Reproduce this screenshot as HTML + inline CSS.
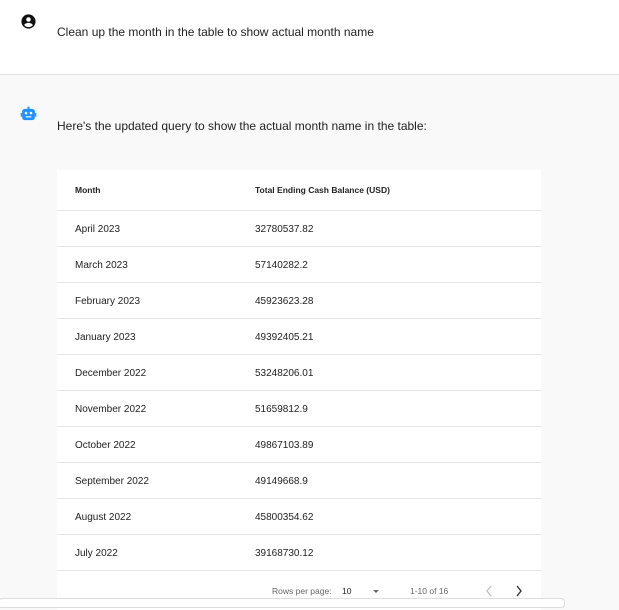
<!DOCTYPE html>
<html><head><meta charset="utf-8"><style>
*{margin:0;padding:0;box-sizing:border-box}
body{width:619px;height:603px;overflow:hidden;font-family:"Liberation Sans",Arial,sans-serif;background:#f9f9f9;position:relative;color:#222}
.top{position:absolute;left:0;top:0;width:619px;height:75px;background:#fff;border-bottom:1px solid #e2e2e2}
.t{position:absolute;font-size:12px;white-space:nowrap}
.tbl{position:absolute;left:57px;top:170px;width:484px;height:440px;background:#fff}
.row{position:absolute;left:0;width:484px;height:36px;border-bottom:1px solid #e6e6e6;font-size:10px}
.row span{position:absolute;top:13px}
.c1{left:18px}.c2{left:198px}
.foot{position:absolute;top:586px;font-size:8.5px;color:#666}
.bot{position:absolute;left:-2px;top:598px;width:567px;height:10px;background:#fff;border:1px solid #ddd;border-radius:4px}
</style></head><body>
<div class="top"></div>
<svg style="position:absolute;left:20px;top:13px" width="17" height="17" viewBox="0 0 24 24"><path fill="#111" d="M12 2a10 10 0 1 0 0 20 10 10 0 0 0 0-20zm0 4a3.2 3.2 0 1 1 0 6.4A3.2 3.2 0 0 1 12 6zm0 14a7.8 7.8 0 0 1-6-2.9c.1-2 4-3.1 6-3.1s5.9 1.1 6 3.1A7.8 7.8 0 0 1 12 20z"/></svg>
<div class="t" style="left:57px;top:25px">Clean up the month in the table to show actual month name</div>
<svg style="position:absolute;left:20px;top:106px" width="17" height="17" viewBox="0 0 24 24"><rect x="10.5" y="1" width="3" height="3" fill="#1e90ff"/><rect x="3" y="4" width="18" height="16" rx="4" fill="#1e90ff"/><rect x="1" y="10" width="2" height="5" fill="#1e90ff"/><rect x="21" y="10" width="2" height="5" fill="#1e90ff"/><circle cx="8.5" cy="10" r="1.8" fill="#fff"/><circle cx="15.5" cy="10" r="1.8" fill="#fff"/><rect x="8" y="14.5" width="8" height="1.6" fill="#fff"/></svg>
<div class="t" style="left:57px;top:119px">Here's the updated query to show the actual month name in the table:</div>
<div class="tbl">
<div class="row" style="top:0;height:41px;font-size:8.5px;font-weight:bold"><span class="c1" style="top:15px">Month</span><span class="c2" style="top:15px">Total Ending Cash Balance (USD)</span></div>
<div class="row" style="top:41px"><span class="c1">April 2023</span><span class="c2">32780537.82</span></div>
<div class="row" style="top:77px"><span class="c1">March 2023</span><span class="c2">57140282.2</span></div>
<div class="row" style="top:113px"><span class="c1">February 2023</span><span class="c2">45923623.28</span></div>
<div class="row" style="top:149px"><span class="c1">January 2023</span><span class="c2">49392405.21</span></div>
<div class="row" style="top:185px"><span class="c1">December 2022</span><span class="c2">53248206.01</span></div>
<div class="row" style="top:221px"><span class="c1">November 2022</span><span class="c2">51659812.9</span></div>
<div class="row" style="top:257px"><span class="c1">October 2022</span><span class="c2">49867103.89</span></div>
<div class="row" style="top:293px"><span class="c1">September 2022</span><span class="c2">49149668.9</span></div>
<div class="row" style="top:329px"><span class="c1">August 2022</span><span class="c2">45800354.62</span></div>
<div class="row" style="top:365px"><span class="c1">July 2022</span><span class="c2">39168730.12</span></div>
</div>
<div class="foot" style="left:272px">Rows per page:</div>
<div class="foot" style="left:342px;color:#222">10</div>
<div style="position:absolute;left:373px;top:590px;width:0;height:0;border-left:3.5px solid transparent;border-right:3.5px solid transparent;border-top:3.5px solid #666"></div>
<div class="foot" style="left:410px">1-10 of 16</div>
<svg style="position:absolute;left:485px;top:585px" width="8" height="12" viewBox="0 0 8 12"><path d="M6 1L2 6l4 5" fill="none" stroke="#bbb" stroke-width="1.2"/></svg>
<svg style="position:absolute;left:515px;top:585px" width="8" height="12" viewBox="0 0 8 12"><path d="M2 1l4 5-4 5" fill="none" stroke="#333" stroke-width="1.4"/></svg>
<div class="bot"></div>
</body></html>
